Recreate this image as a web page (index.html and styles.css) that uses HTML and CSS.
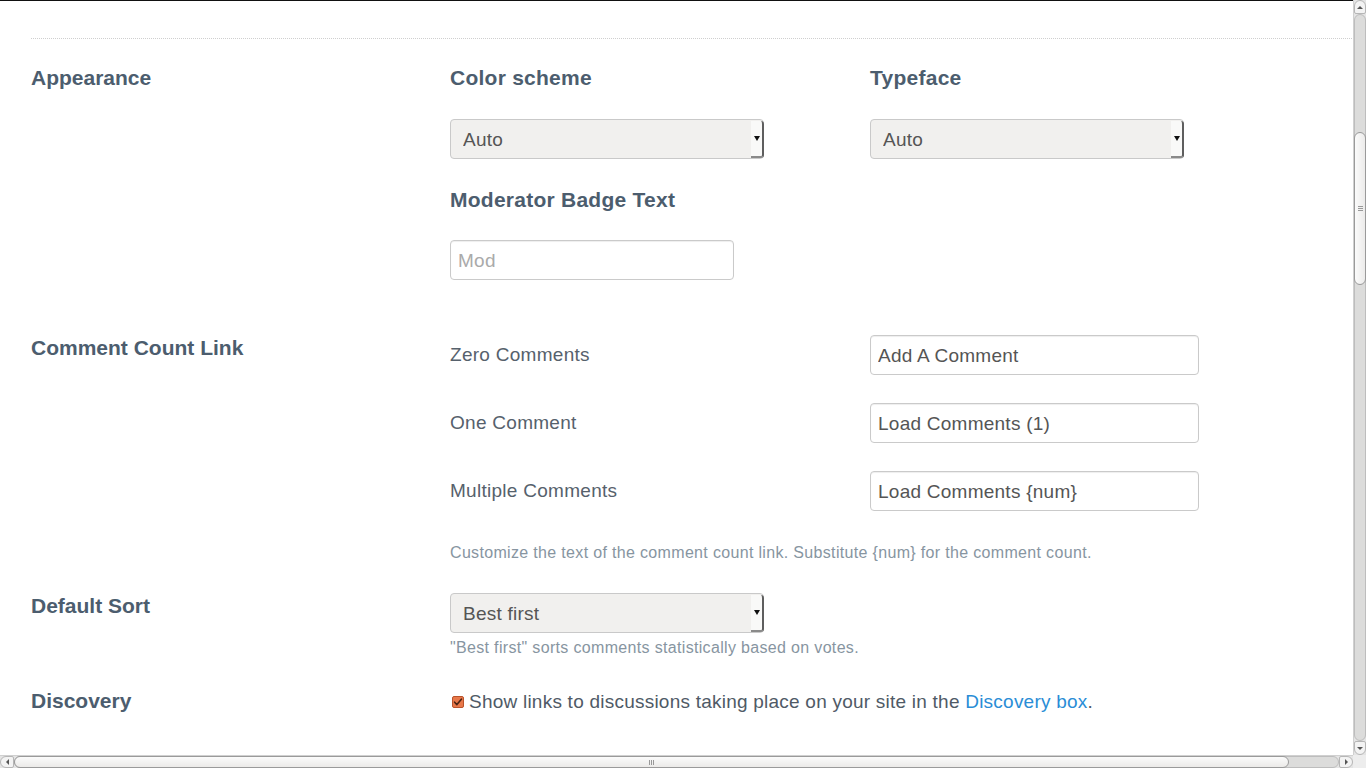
FILE: index.html
```html
<!DOCTYPE html>
<html lang="en">
<head>
<meta charset="utf-8">
<title>Settings</title>
<link rel="stylesheet" href="styles.css">
</head>
<body>
<div class="page">
  <div class="rule"></div>

  <section class="section section-appearance">
    <h2 class="section-title">Appearance</h2>
    <div class="fields">
      <div class="field">
        <h3 class="field-title">Color scheme</h3>
        <div class="select">
          <select><option>Auto</option></select>
          <span class="select-arrow"></span>
        </div>
      </div>
      <div class="field">
        <h3 class="field-title">Typeface</h3>
        <div class="select">
          <select><option>Auto</option></select>
          <span class="select-arrow"></span>
        </div>
      </div>
      <div class="field">
        <h3 class="field-title">Moderator Badge Text</h3>
        <input class="text-input badge-input" type="text" placeholder="Mod">
      </div>
    </div>
  </section>

  <section class="section section-count">
    <h2 class="section-title">Comment Count Link</h2>
    <div class="count-body">
      <div class="count-rows">
        <div class="count-row">
          <span class="row-label">Zero Comments</span>
          <input class="text-input count-input" type="text" value="Add A Comment">
        </div>
        <div class="count-row">
          <span class="row-label">One Comment</span>
          <input class="text-input count-input" type="text" value="Load Comments (1)">
        </div>
        <div class="count-row">
          <span class="row-label">Multiple Comments</span>
          <input class="text-input count-input" type="text" value="Load Comments {num}">
        </div>
      </div>
      <p class="help help-count">Customize the text of the comment count link. Substitute {num} for the comment count.</p>
    </div>
  </section>

  <section class="section section-sort">
    <h2 class="section-title">Default Sort</h2>
    <div class="sort-body">
      <div class="select">
        <select><option>Best first</option></select>
        <span class="select-arrow"></span>
      </div>
      <p class="help help-sort">"Best first" sorts comments statistically based on votes.</p>
    </div>
  </section>

  <section class="section section-discovery">
    <h2 class="section-title">Discovery</h2>
    <label class="check-line">
      <svg class="checkbox" width="12" height="12" viewBox="0 0 12 12" aria-hidden="true">
        <rect x="0.5" y="0.5" width="11" height="11" rx="1.5" fill="#e8784a" stroke="#b9532b"/>
        <path d="M2.6 6.2 L4.9 8.6 L9.4 3.2" fill="none" stroke="#4a2414" stroke-width="1.6" stroke-linecap="round" stroke-linejoin="round"/>
      </svg>
      <span>Show links to discussions taking place on your site in the <a class="link" href="#">Discovery box</a>.</span>
    </label>
  </section>
</div>

<div class="vscroll">
  <div class="sb-btn sb-up"><span class="tri tri-up"></span></div>
  <div class="v-trough">
    <div class="v-thumb"><span class="grip-v"></span></div>
  </div>
  <div class="sb-btn sb-down"><span class="tri tri-down"></span></div>
</div>
<div class="hscroll">
  <div class="sb-btn sb-left"><span class="tri tri-left"></span></div>
  <div class="h-trough">
    <div class="h-thumb"><span class="grip-h"></span></div>
  </div>
  <div class="sb-btn sb-right"><span class="tri tri-right"></span></div>
</div>
<div class="sb-corner"></div>
</body>
</html>
```
FILE: styles.css
```css
html, body {
  margin: 0;
  padding: 0;
  overflow: hidden;
  background: #fff;
}
body {
  border-top: 1px solid #111;
  font-family: "Liberation Sans", Arial, sans-serif;
  color: #56616c;
}
.page {
  padding: 37px 14px 0 31px;
}
.rule {
  border-top: 1px dotted #cfcfcf;
}
.section {
  display: grid;
  grid-template-columns: 419px 1fr;
}
.section-appearance { margin-top: 24px; }
.section-count { margin-top: 53px; }
.section-sort { margin-top: 28px; }
.section-discovery { margin-top: 28px; }

.section-title,
.field-title {
  margin: 0;
  font-size: 21px;
  line-height: 30px;
  font-weight: bold;
  color: #4c5d6e;
}
.section-title {
  letter-spacing: 0;
}
.field-title {
  letter-spacing: 0.25px;
}
.fields {
  display: grid;
  grid-template-columns: 420px 420px;
  row-gap: 25px;
}
.field-title {
  margin-bottom: 26px;
}
.fields .field:nth-child(3) .field-title {
  padding-top: 1px;
  margin-bottom: 25px;
}

/* select */
.select {
  position: relative;
  width: 314px;
  height: 40px;
}
.select select {
  -webkit-appearance: none;
  appearance: none;
  box-sizing: border-box;
  width: 100%;
  height: 100%;
  margin: 0;
  padding: 0 20px 0 12px;
  border: 1px solid #c9c9c9;
  border-radius: 4px;
  background: #f1f0ee;
  font-family: "Liberation Sans", Arial, sans-serif;
  font-size: 19px;
  letter-spacing: 0.25px;
  color: #555;
  outline: none;
}
.select-arrow {
  position: absolute;
  top: 2px;
  right: 0;
  bottom: 1px;
  width: 11px;
  background: #f9f9f8;
  border-right: 2px solid #5e5e5e;
  border-bottom: 2px solid #8a8a8a;
  border-radius: 0 3px 3px 0;
}
.select-arrow::after {
  content: "";
  position: absolute;
  left: 3px;
  top: 15px;
  border-left: 3px solid transparent;
  border-right: 3px solid transparent;
  border-top: 5px solid #111;
}

/* text inputs */
.text-input {
  box-sizing: border-box;
  height: 40px;
  margin: 0;
  padding: 1px 7px 0;
  border: 1px solid #cacaca;
  border-radius: 4px;
  box-shadow: inset 0 1px 1px rgba(0, 0, 0, 0.07);
  background: #fff;
  font-family: "Liberation Sans", Arial, sans-serif;
  font-size: 19px;
  letter-spacing: 0.25px;
  color: #555;
  outline: none;
}
.text-input::placeholder {
  color: #aaa;
}
.badge-input { width: 284px; }
.count-input { width: 329px; }

/* comment count */
.count-body { padding-top: 2px; }
.count-rows {
  display: flex;
  flex-direction: column;
  gap: 28px;
}
.count-row {
  display: grid;
  grid-template-columns: 420px 329px;
  align-items: center;
}
.row-label {
  font-size: 19px;
  letter-spacing: 0.28px;
  color: #56616c;
}
.help {
  margin: 0;
  font-size: 16px;
  line-height: 20px;
  letter-spacing: 0.33px;
  color: #8795a1;
}
.help-count { margin-top: 32px; }

.sort-body { padding-top: 2px; }
.help-sort { margin-top: 5px; }

/* discovery */
.check-line {
  display: flex;
  align-items: center;
  gap: 5px;
  padding-left: 2px;
  padding-top: 1px;
  font-size: 19px;
  line-height: 30px;
  letter-spacing: 0.23px;
  color: #4f5a66;
}
.checkbox { flex: none; }
.link {
  color: #2a8dd6;
  text-decoration: none;
}

/* fake GTK scrollbars */
.vscroll {
  position: fixed;
  top: 0;
  right: 0;
  width: 13px;
  bottom: 13px;
  display: flex;
  flex-direction: column;
  background: #e4e4e4;
  border-left: 1px solid #d0d0d0;
  box-sizing: border-box;
}
.hscroll {
  position: fixed;
  left: 0;
  right: 13px;
  bottom: 0;
  height: 13px;
  display: flex;
  background: #e4e4e4;
  border-top: 1px solid #d0d0d0;
  box-sizing: border-box;
}
.sb-corner {
  position: fixed;
  right: 0;
  bottom: 0;
  width: 13px;
  height: 13px;
  background: #ededed;
}
.sb-btn {
  flex: none;
  display: flex;
  align-items: center;
  justify-content: center;
  background: #f3f3f3;
  border: 1px solid #b6b6b6;
  box-sizing: border-box;
}
.vscroll .sb-btn { height: 14px; }
.hscroll .sb-btn { width: 14px; }
.sb-up { border-radius: 6px 6px 2px 2px; }
.sb-down { border-radius: 2px 2px 6px 6px; }
.sb-left { border-radius: 6px 2px 2px 6px; }
.sb-right { border-radius: 2px 6px 6px 2px; }
.tri { width: 0; height: 0; }
.tri-up { border-left: 3px solid transparent; border-right: 3px solid transparent; border-bottom: 3px solid #555; }
.tri-down { border-left: 3px solid transparent; border-right: 3px solid transparent; border-top: 3px solid #555; }
.tri-left { border-top: 3px solid transparent; border-bottom: 3px solid transparent; border-right: 3px solid #555; }
.tri-right { border-top: 3px solid transparent; border-bottom: 3px solid transparent; border-left: 3px solid #555; }

.v-trough {
  position: relative;
  flex: 1;
  background: #dcdcdb;
  border: 1px solid #bdbdbd;
  border-radius: 6px;
}
.h-trough {
  position: relative;
  flex: 1;
  background: #dcdcdb;
  border: 1px solid #bdbdbd;
  border-radius: 6px;
}
.v-thumb {
  position: absolute;
  left: -1px;
  right: -1px;
  top: 117px;
  height: 153px;
  background: linear-gradient(to right, #fbfbfb, #ecebea);
  border: 1px solid #9a9a9a;
  border-radius: 6px;
  box-sizing: border-box;
  display: flex;
  align-items: center;
  justify-content: center;
}
.h-thumb {
  position: absolute;
  top: -1px;
  bottom: -1px;
  left: -1px;
  width: 1275px;
  background: linear-gradient(to bottom, #fbfbfb, #ebeae8);
  border: 1px solid #9a9a9a;
  border-radius: 6px;
  box-sizing: border-box;
  display: flex;
  align-items: center;
  justify-content: center;
}
.grip-v {
  width: 5px;
  height: 5px;
  background: repeating-linear-gradient(to bottom, #999 0 1px, transparent 1px 2px);
}
.grip-h {
  width: 5px;
  height: 5px;
  background: repeating-linear-gradient(to right, #999 0 1px, transparent 1px 2px);
}
```
